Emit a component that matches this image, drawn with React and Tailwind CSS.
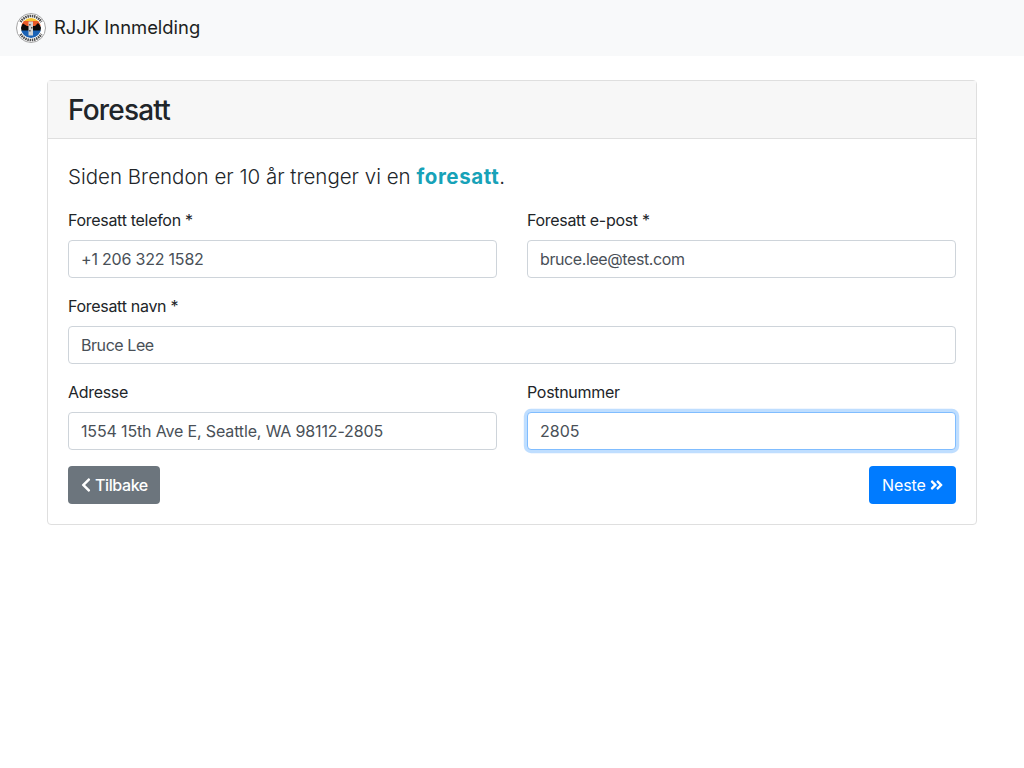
import React from 'react';
import { FaChevronLeft, FaAngleDoubleRight } from 'react-icons/fa';

function Logo() {
  return (
    <svg width="30" height="30" viewBox="0 0 30 30" className="block">
      <defs>
        <clipPath id="inner">
          <circle cx="15" cy="15" r="10" />
        </clipPath>
      </defs>
      <circle cx="15" cy="15" r="14.5" fill="#fff" stroke="#a5a5a5" />
      <path d="M4.6 9 A12 12 0 0 1 25.4 9" fill="none" stroke="#222" strokeWidth="2.6" strokeDasharray="1.5 0.7" opacity="0.8" />
      <path d="M4.6 21 A12 12 0 0 0 25.4 21" fill="none" stroke="#222" strokeWidth="2.6" strokeDasharray="1.5 0.7" opacity="0.8" />
      <g clipPath="url(#inner)">
        <rect x="0" y="5" width="30" height="4" fill="#f7c62f" />
        <rect x="0" y="8" width="30" height="5" fill="#ea5a28" />
        <path d="M4 15 L7 10.5 L11 13 L19 13 L22 10 L26 15 L26 18 L4 18 Z" fill="#0c0c0c" />
        <rect x="0" y="17.5" width="30" height="8" fill="#1b62b5" />
      </g>
      <rect x="12.5" y="8.5" width="4.5" height="14" fill="#d4d4d4" />
      <rect x="13.3" y="11" width="1.2" height="1.5" fill="#333" />
      <rect x="15.2" y="14" width="1.2" height="1.5" fill="#333" />
      <rect x="13.3" y="17" width="1.2" height="1.5" fill="#333" />
    </svg>
  );
}

function Field({ label, value, focused, className, spacing = 'tracking-[-0.2px]' }) {
  return (
    <div className={className}>
      <label className="mb-2 block text-base leading-6 tracking-[-0.3px] text-[#212529]">{label}</label>
      <input
        readOnly
        value={value}
        className={
          (focused
            ? 'border-[#80bdff] shadow-[0_0_0_3.2px_rgba(0,123,255,0.25)] '
            : 'border-[#ced4da] ') +
          'block h-[38px] w-full rounded border bg-white px-3 text-base text-[#495057] outline-none ' +
          spacing
        }
      />
    </div>
  );
}

export default function App() {
  return (
    <div className="min-h-[768px] bg-white font-['Inter',sans-serif] text-[#212529]">
      <nav className="flex h-14 items-center gap-2 bg-[#f8f9fa] px-4">
        <Logo />
        <span className="text-[18.4px] text-[#1c1f22]">RJJK Innmelding</span>
      </nav>

      <div className="mx-auto mt-6 w-[930px] rounded border border-[#dfdfdf]">
        <div className="border-b border-[#dfdfdf] bg-[#f7f7f7] px-5 pt-[13px] pb-[11px]">
          <h3 className="text-[28px] leading-[33px] font-medium tracking-[-0.8px]">Foresatt</h3>
        </div>
        <div className="px-5 pt-[21px] pb-5">
          <p className="mb-[14px] text-[20.5px] leading-[34px] font-light">
            Siden Brendon er 10 år trenger vi en{' '}
            <strong className="font-bold tracking-[0.6px] text-[#17a2b8]">foresatt</strong>.
          </p>
          <div className="grid grid-cols-2 gap-x-[30px] gap-y-4">
            <Field label="Foresatt telefon *" value="+1 206 322 1582" />
            <Field label="Foresatt e-post *" value="bruce.lee@test.com" spacing="tracking-[-0.4px]" />
            <Field className="col-span-2" label="Foresatt navn *" value="Bruce Lee" spacing="tracking-[-0.44px]" />
            <Field label="Adresse" value="1554 15th Ave E, Seattle, WA 98112-2805" spacing="tracking-[-0.15px]" />
            <Field label="Postnummer" value="2805" spacing="tracking-normal" focused />
          </div>
          <div className="mt-4 flex justify-between">
            <button className="flex h-[38px] w-[92px] items-center gap-[3px] rounded bg-[#6c757d] px-3 text-base font-medium tracking-[-0.4px] text-white">
              <FaChevronLeft className="h-4 w-3" />
              Tilbake
            </button>
            <button className="flex h-[38px] w-[87px] items-center gap-1 rounded bg-[#007bff] px-[13px] text-base tracking-[-0.1px] text-white">
              Neste
              <FaAngleDoubleRight className="h-4 w-[15px]" />
            </button>
          </div>
        </div>
      </div>
    </div>
  );
}
